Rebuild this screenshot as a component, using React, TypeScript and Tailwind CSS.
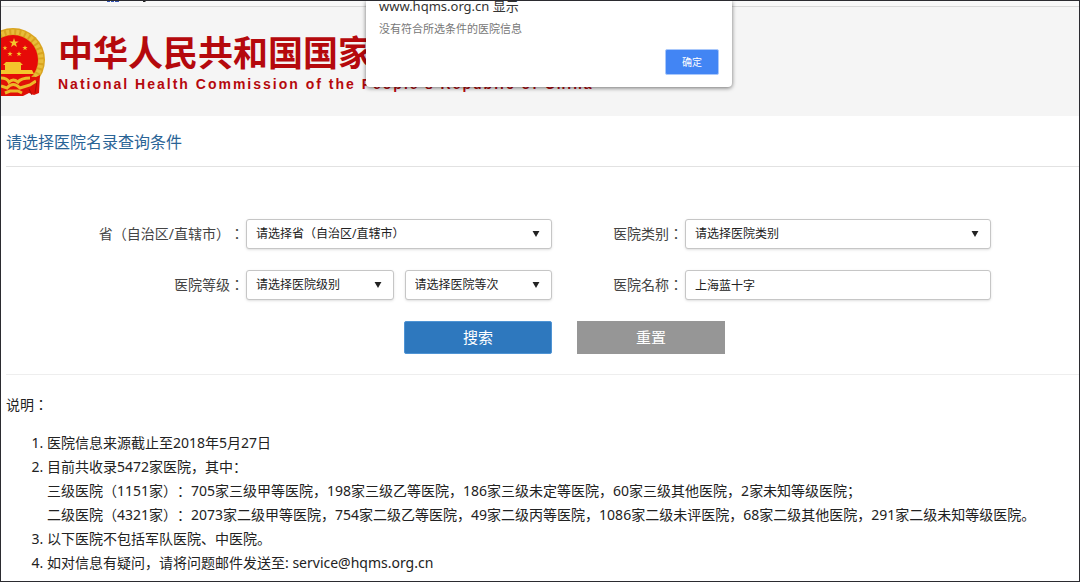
import type { ReactNode } from "react";

const CJK = "font-['Noto_Sans','Noto_Sans_CJK_SC',sans-serif] [text-spacing-trim:space-all]";
// the TC face centres the full-width colon in its box
const CJK_LABEL = "font-['Noto_Sans','Noto_Sans_CJK_TC',sans-serif]";

interface SelectProps {
  id: string;
  label?: string;
  placeholder: string;
}

function Select({ id, label, placeholder }: SelectProps) {
  return (
    <div className="relative min-w-0 flex-1">
      <select
        id={id}
        aria-label={label}
        className="h-[30px] w-full appearance-none rounded-[3px] border border-[#c6c6c6] bg-white px-[9px] text-xs text-[#222] shadow-sm"
      >
        <option>{placeholder}</option>
      </select>
      <svg
        viewBox="0 0 8 7"
        className="pointer-events-none absolute top-3 right-3 h-[6px] w-2"
        aria-hidden="true"
      >
        <path d="M0 0h8L4 7z" fill="#222" />
      </svg>
    </div>
  );
}

function FieldLabel({ htmlFor, children }: { htmlFor: string; children: ReactNode }) {
  return (
    <label
      htmlFor={htmlFor}
      className={`pr-[2px] text-right text-sm whitespace-nowrap text-[#444] ${CJK_LABEL}`}
    >
      {children}
    </label>
  );
}

const STAR = "M0-5 1.2-1.6H4.8L1.9.6 3 4 0 1.9-3 4-1.9.6-4.8-1.6H-1.2z";

function Emblem() {
  return (
    <svg viewBox="0 0 46 70" className="h-[70px] w-[46px] shrink-0" aria-hidden="true">
      <circle cx="12" cy="33" r="32" fill="#d9a420" />
      <circle cx="12" cy="33" r="28" fill="none" stroke="#e8bd3a" strokeWidth="5" strokeDasharray="3 2" />
      <circle cx="12" cy="33" r="25" fill="#e60a08" />
      <g fill="#f4c62c">
        <path d={STAR} transform="translate(13 16)" />
        <path d={STAR} transform="translate(4 21) scale(.5)" />
        <path d={STAR} transform="translate(9 27) scale(.55)" />
        <path d={STAR} transform="translate(18 27) scale(.55)" />
        <path d={STAR} transform="translate(24 21) scale(.55)" />
        <path d="M5 35h14l3 3h-2v5h11l2 4H0v-4h4v-5H2z" />
      </g>
      <path d="M0 50h35l4-2-1 18-5 2-5-2-6 3H0z" fill="#e01008" />
      <path
        d="M0 51q6 0 8 4 4-4 9 0 3-4 12-4M0 59l6 2q6-7 13 0l10-3 6-4M4 66l5-2h8l4 2"
        fill="none"
        stroke="#edb928"
        strokeWidth="3"
      />
      <path d="M28 62l3 6M36 54l-2 12" fill="none" stroke="#a90c05" strokeWidth="1" />
    </svg>
  );
}

function AlertDialog() {
  return (
    <div
      role="alertdialog"
      aria-labelledby="alert-title"
      aria-describedby="alert-text"
      className="absolute top-0 left-[365px] w-[366px] rounded-b-sm bg-white px-[13px] pb-3 shadow-[0_1px_4px_rgba(0,0,0,0.55)]"
    >
      <h2 id="alert-title" className="-mt-1 text-[13px] leading-[18px] text-[#333]">
        www.hqms.org.cn 显示
      </h2>
      <p id="alert-text" className="mt-[6px] text-[11px] leading-4 text-[#777]">
        没有符合所选条件的医院信息
      </p>
      <div className="mt-3 flex justify-end">
        <button
          type="button"
          className="h-[26px] w-[54px] rounded-xs border border-[#a9c8fb] bg-[#4285f4] text-[10px] text-white"
        >
          确定
        </button>
      </div>
    </div>
  );
}

export default function App() {
  return (
    <div className={`relative min-h-screen overflow-hidden border border-[#2b2b30] bg-white ${CJK}`}>
      <header className="bg-[#f5f5f5]">
        <div className="h-[6px] border-b border-[#d8d8d8] bg-[#f8f8f8]">
          {/* bottom edge of the bookmarks row */}
          <svg viewBox="0 0 50 2" className="ml-[105px] h-[2px] w-[50px]" aria-hidden="true">
            <path d="M1 0h3v1H1zM5 0h3v1H5zM9 0h4v1H9z" fill="#3454b4" />
            <path d="M37 0h3l-1 1h-2z" fill="#222" />
          </svg>
        </div>
        <div className="flex h-[109px] items-start pt-5">
          <Emblem />
          <div className="ml-[11px] whitespace-nowrap text-[#b5090d]">
            <h1 className="pt-1 text-[35px] leading-[44px] font-bold">中华人民共和国国家卫生健康委员会</h1>
            <p className="font-['Liberation_Sans',sans-serif] text-sm leading-[18px] font-bold tracking-[2px]">
              National Health Commission of the People's Republic of China
            </p>
          </div>
        </div>
      </header>
      <AlertDialog />

      <main className="pl-[5px]">
        <h2 className="border-b border-[#e2e2e2] pt-[14px] pb-3 text-base leading-6 text-[#2a6496]">
          请选择医院名录查询条件
        </h2>

        <form
          onSubmit={(e) => e.preventDefault()}
          className="grid grid-cols-[240fr_306fr_133fr_306fr_88fr] items-center gap-y-[21px] border-b border-[#eee] pt-[52px] pb-5"
        >
          <FieldLabel htmlFor="province">省（自治区/直辖市）：</FieldLabel>
          <div className="flex">
            <Select id="province" placeholder="请选择省（自治区/直辖市）" />
          </div>
          <FieldLabel htmlFor="category">医院类别：</FieldLabel>
          <div className="flex">
            <Select id="category" placeholder="请选择医院类别" />
          </div>
          <span />

          <FieldLabel htmlFor="level">医院等级：</FieldLabel>
          <div className="flex gap-[11px]">
            <Select id="level" placeholder="请选择医院级别" />
            <Select id="grade" label="医院等次" placeholder="请选择医院等次" />
          </div>
          <FieldLabel htmlFor="name">医院名称：</FieldLabel>
          <input
            id="name"
            type="text"
            defaultValue="上海蓝十字"
            className="h-[30px] w-full min-w-0 rounded-[3px] border border-[#c6c6c6] bg-white px-[9px] text-xs text-[#222] shadow-sm"
          />
          <span />

          <button
            type="submit"
            className="col-start-2 h-[33px] w-[148px] justify-self-end rounded-xs border border-[#4f94d4] bg-[#2e78be] text-[15px] text-white"
          >
            搜索
          </button>
          <button
            type="reset"
            className="col-span-2 ml-[25px] h-[33px] w-[148px] bg-[#969696] text-[15px] text-white"
          >
            重置
          </button>
        </form>

        <section className="text-sm leading-6 text-[#222]">
          <p className={`pt-[18px] ${CJK_LABEL}`}>说明：</p>
          <ol className="mt-[14px] list-decimal pl-[41px]">
            <li>医院信息来源截止至2018年5月27日</li>
            <li>
              目前共收录5472家医院，其中：
              <br />
              三级医院（1151家）：705家三级甲等医院，198家三级乙等医院，186家三级未定等医院，60家三级其他医院，2家未知等级医院；
              <br />
              二级医院（4321家）：2073家二级甲等医院，754家二级乙等医院，49家二级丙等医院，1086家二级未评医院，68家二级其他医院，291家二级未知等级医院。
            </li>
            <li>以下医院不包括军队医院、中医院。</li>
            <li>如对信息有疑问，请将问题邮件发送至: service@hqms.org.cn</li>
          </ol>
        </section>
      </main>
    </div>
  );
}
